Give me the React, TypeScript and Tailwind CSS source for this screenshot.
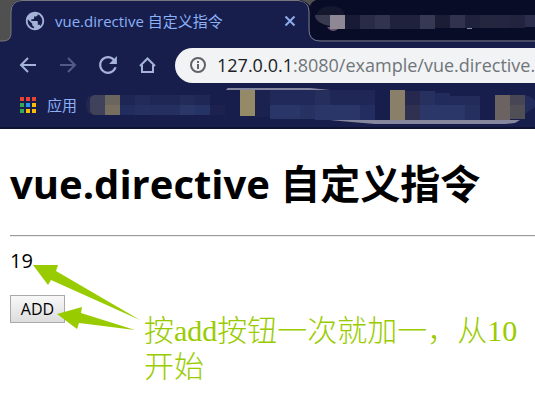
import React, { useState } from "react";
import { MdPublic } from "react-icons/md";

const blocks: [number, number, number, number, string][] = [
  [105, 95, 15, 10, "#6b655f"], [105, 105, 15, 10, "#766f60"], [120, 95, 15, 10, "#1e2654"], [120, 105, 15, 10, "#222d5f"],
  [135, 95, 15, 10, "#232b5a"], [135, 105, 15, 10, "#263161"], [150, 95, 30, 10, "#1f2755"], [150, 105, 30, 10, "#263060"],
  [180, 95, 15, 10, "#232b58"], [195, 95, 15, 10, "#1f2755"],
  [180, 105, 15, 10, "#2b3768"], [195, 105, 15, 10, "#263365"], [210, 105, 15, 10, "#1c2150"],
  [240, 90, 15, 26, "#958a68"], [255, 90, 15, 27, "#1c2250"], [270, 90, 45, 15, "#20295a"], [270, 105, 30, 14, "#2b3668"], [300, 105, 15, 14, "#273263"],
  [315, 90, 15, 15, "#252e5d"], [315, 105, 30, 15, "#2a3568"], [330, 90, 45, 15, "#1f2757"], [345, 105, 15, 15, "#2b3567"], [360, 105, 15, 15, "#232d60"],
  [390, 90, 15, 30, "#8a8069"], [405, 91, 15, 14, "#26294d"], [405, 105, 15, 15, "#303150"], [420, 91, 15, 14, "#263160"], [435, 93, 15, 12, "#222c5c"],
  [450, 96, 30, 9, "#222b59"], [420, 105, 45, 15, "#2a3768"], [465, 105, 15, 15, "#25305f"],
  [495, 95, 15, 25, "#6a6361"], [510, 95, 15, 10, "#474655"], [510, 105, 15, 14, "#504f56"],
];

const tabBlocks: [number, number, number, number, string][] = [
  [345, 15, 15, 14, "#191b36"],
  [360, 15, 15, 14, "#292b47"], [375, 15, 15, 14, "#31334f"], [390, 15, 30, 14, "#20213d"], [420, 15, 15, 14, "#373852"],
  [435, 15, 15, 13, "#1b1d36"], [450, 15, 15, 13, "#31324e"], [465, 15, 15, 13, "#20213c"], [480, 15, 30, 13, "#24253f"],
  [510, 15, 15, 13, "#22233e"], [525, 15, 10, 12, "#2c2d4c"],
];

const dots = ["#ea4335", "#ea4335", "#ea4335", "#34a853", "#2196f3", "#fbbc05", "#34a853", "#fbbc05", "#fbbc05"];

function TabStrip() {
  return (
    <header className="relative flex h-[42px] items-center overflow-hidden">
      <svg className="absolute left-0 top-0" width="535" height="42" aria-hidden="true">
        <path d="M0 0H20Q11 1 11 12V33Q11 41 3 41H0Z" fill="#505050" />
        <path d="M0 41H3Q11 41 11 33V12Q11 1 22 .5H298Q309 1 309 12V30Q309 41 320 41H535" fill="none" stroke="#77777d" />
        <path d="M300 0H535V40H321Q310 40 310 30V12Q310 3 300 0Z" fill="#090c27" />
        <path d="M300 0H316Q311 2 310 6Q306 1 300 0Z" fill="#505050" />
        <path d="M316 15Q319 6 332 6Q344 7 345 15Z" fill="#15172e" />
        <path d="M315 15H330V26Q315 23 315 15Z" fill="#393a4f" />
        <path d="M327 27H340Q333 35 327 27Z" fill="#69536f" />
        <rect x="330" y="15" width="15" height="14" fill="#8e8894" />
        {tabBlocks.map(([x, y, w, h, c]) => <rect key={`${x}-${y}`} x={x} y={y} width={w} height={h} fill={c} />)}
        <path d="M467 28.500H472" stroke="#8c8ba0" />
      </svg>
      <div className="relative ml-6 flex w-[272px] items-center text-[#8ab0f8]">
        <MdPublic size={22} color="#a6b3d9" aria-hidden="true" className="shrink-0" />
        <span className="ml-[9px] whitespace-nowrap text-[15px] leading-5">vue.directive 自定义指令</span>
        <button aria-label="Close tab" className="ml-auto">
          <svg width="12" height="12" viewBox="0 0 12 12"><path d="M1.500 1.500L10.500 10.500M10.500 1.500L1.500 10.500" stroke="#8cabea" strokeWidth="2" /></svg>
        </button>
      </div>
    </header>
  );
}

function Toolbar() {
  return (
    <div className="flex h-[46px] items-center overflow-hidden pl-[18px]">
      <nav className="flex shrink-0 gap-5">
        <button aria-label="Back"><svg width="20" height="20" fill="none" stroke="#a6b3d9" strokeWidth="2"><path d="M18 10H3M10 3L3 10L10 17" /></svg></button>
        <button aria-label="Forward" disabled><svg width="20" height="20" fill="none" stroke="#515a89" strokeWidth="2"><path d="M2 10H17M10 3L17 10L10 17" /></svg></button>
        <button aria-label="Reload"><svg width="20" height="20" viewBox="3 3 18 18" fill="#a6b3d9"><path d="M17.650 6.350C16.200 4.900 14.210 4 12 4c-4.420 0-7.990 3.580-7.990 8s3.570 8 7.990 8c3.730 0 6.840-2.550 7.730-6h-2.080c-.82 2.330-3.040 4-5.650 4-3.310 0-6-2.690-6-6s2.690-6 6-6c1.660 0 3.140.69 4.220 1.780L13 11h7V4l-2.350 2.350z" /></svg></button>
        <button aria-label="Home"><svg width="20" height="20" fill="none" stroke="#a6b3d9" strokeWidth="2"><path d="M2 11L9.500 3.500L17 11M4 10V17H15V10" /></svg></button>
      </nav>
      <div className="ml-[17px] flex h-[35px] min-w-0 flex-1 items-center overflow-hidden rounded-l-full bg-[#f1f3f4] pl-[14px]">
        <svg className="shrink-0" width="18" height="18" fill="none" stroke="#5f6368" strokeWidth="2" aria-hidden="true"><circle cx="9" cy="9" r="7" /><path d="M9 8V13M9 5V7" /></svg>
        <span className="ml-[10px] whitespace-nowrap text-[18px] leading-6 text-[#70757a]"><span className="text-[#202124]">127.0.0.1</span>:8080/example/vue.directive.h</span>
      </div>
    </div>
  );
}

function Bookmarks() {
  return (
    <div className="relative flex h-[41px] items-center overflow-hidden border-b-2 border-[#0e1233] pb-[6px] pl-5">
      <svg className="absolute left-0 top-0" width="535" height="39" viewBox="0 88 535 39" aria-hidden="true">
        <path d="M226 90L230 85L241 84L300 87L330 90Z" fill="#85889f" />
        <path d="M330 120H520L515 123L505 124H375L340 121Z" fill="#85889f" />
        <path d="M90 95Q86 99 86 106Q87 112 90 115Z" fill="#22284e" />
        <path d="M94 95H105V115H94Q90 114 90 110V99Q90 96 94 95Z" fill="#40415a" />
        <path d="M525 95Q533 97 535 101V107L525 114Z" fill="#222c5d" />
        {blocks.map(([x, y, w, h, c]) => <rect key={`${x}-${y}`} x={x} y={y} width={w} height={h} fill={c} />)}
      </svg>
      <a href="#apps" className="relative flex items-center gap-[11px] text-[#8ab0f8]">
        <span className="grid grid-cols-3 gap-[2px]">
          {dots.map((c, i) => <i key={i} className="size-1" style={{ backgroundColor: c }} />)}
        </span>
        <span className="text-[15px] leading-5">应用</span>
      </a>
    </div>
  );
}

export default function App() {
  const [count, setCount] = useState(19);
  return (
    <div className="min-h-screen overflow-hidden bg-white font-['Open_Sans','Noto_Sans_CJK_SC',sans-serif]">
      <div className="bg-[#181e4b]">
        <TabStrip />
        <Toolbar />
        <Bookmarks />
      </div>
      <main className="relative pl-[10px] pt-7 text-black">
        <h1 className="whitespace-nowrap text-[40px] font-bold leading-[54px]">vue.directive 自定义指令</h1>
        <hr className="mt-6 h-[2px] border-t border-b border-t-[#9a9a9a] border-b-[#eeeeee]" />
        <p className="mt-[10px] text-xl leading-7">{count}</p>
        <button onClick={() => setCount(count + 1)} className="mt-5 h-7 w-[55px] border border-[#a9a9a9] bg-linear-to-b from-[#f8f8f8] to-[#dddddd] text-base leading-6">ADD</button>
        <svg className="absolute left-0 top-[131px]" width="150" height="80" viewBox="0 260 150 80" fill="#99cc00" aria-hidden="true">
          <path d="M33 265L58 265L56 271L140 320L51 280L48 285Z" />
          <path d="M57 314L82 307L81 313L135 330L79 323L77 329Z" />
        </svg>
        <p className="absolute left-[144px] top-[184px] w-[380px] font-['Liberation_Serif','Noto_Sans_CJK_SC',serif] text-[30px] font-light leading-9 text-[#99cc00]">按add按钮一次就加一，从10开始</p>
      </main>
    </div>
  );
}
